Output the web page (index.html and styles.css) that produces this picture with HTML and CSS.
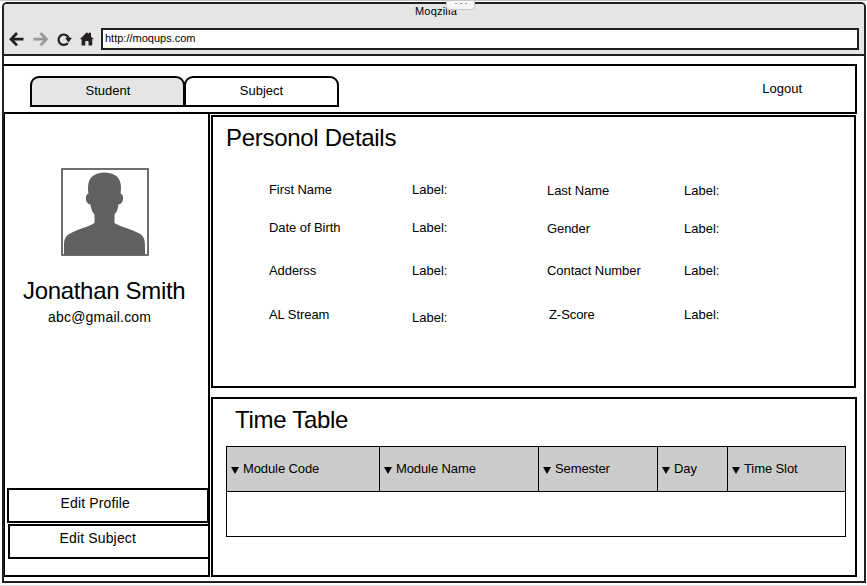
FILE: index.html
```html
<!DOCTYPE html>
<html lang="en">
<head>
<meta charset="utf-8">
<title>Moqzilla</title>
<link rel="stylesheet" href="styles.css">
</head>
<body>
<div class="window">
  <div class="handle"><i></i><i></i><i></i></div>
  <div class="chrome">
    <div class="window-title">Moqzilla</div>
    <div class="toolbar">
      <svg class="nav-icons" width="97" height="22" viewBox="4 28 97 22">
        <g fill="none" stroke-width="2.7">
          <path stroke="#231f20" d="M23.5 39.2H11.500M17 33L11 39.200L17 45.400"/>
          <path stroke="#999" d="M33.500 39.2H46M40.500 33L46.500 39.200L40.500 45.400"/>
          <path stroke="#231f20" stroke-width="2.2" d="M67.8 43A5.200 5.200 0 1 1 68.800 38.400"/>
        </g>
        <path fill="#231f20" d="M65 37.700H72L68.500 42.400ZM79.800 39.300L86.800 32.300L88.600 34.100V32.800H91V36.400L93.800 39.300H92.200V45.600H88.500V40.900H85.300V45.600H81.600V39.300Z"/>
      </svg>
      <div class="url">http://moqups.com</div>
    </div>
  </div>
  <header class="header">
    <nav class="tabs">
      <div class="tab active">Student</div>
      <div class="tab">Subject</div>
    </nav>
    <div class="logout">Logout</div>
  </header>
  <div class="body">
    <aside class="sidebar">
      <svg class="avatar" width="88" height="88" viewBox="0 0 88 88">
        <rect x="1" y="1" width="86" height="86" fill="#fff" stroke="#606060" stroke-width="1.8"/>
        <path fill="#606060" d="M3 87V79C3 71 4 68.500 9 65.500C17 61 27 59 33.500 55V46.500C31 44 30 40 29.500 36.500C24 36 23.500 26.500 27.500 25.500C26.500 20 27.300 17 27.500 15C29 8 35.500 4.500 43.500 4.500S58 8 59.500 15C59.700 17 60.500 20 59.500 25.500C63.500 26.500 63 36 57.500 36.500C57 40 56 44 53.500 46.500V55C60 59 70 61 78.500 65.500C83 68.500 84 71 84 79V87Z"/>
      </svg>
      <div class="name">Jonathan Smith</div>
      <div class="email">abc@gmail.com</div>
      <div class="actions">
        <div class="action profile">Edit Profile</div>
        <div class="action subject">Edit Subject</div>
      </div>
    </aside>
    <main class="main">
      <section class="panel details">
        <h1>Personol Details</h1>
        <div class="fields">
          <span>First Name</span><span>Label:</span><span class="low">Last Name</span><span class="low">Label:</span>
          <span>Date of Birth</span><span>Label:</span><span class="low">Gender</span><span class="low">Label:</span>
          <span>Adderss</span><span>Label:</span><span>Contact Number</span><span>Label:</span>
          <span>AL Stream</span><span class="lower">Label:</span><span class="inset">Z-Score</span><span>Label:</span>
        </div>
      </section>
      <section class="panel timetable">
        <h1>Time Table</h1>
        <div class="table">
          <div class="row head">
            <div class="cell">Module Code</div><div class="cell">Module Name</div><div class="cell">Semester</div><div class="cell">Day</div><div class="cell">Time Slot</div>
          </div>
          <div class="row empty"></div>
        </div>
      </section>
    </main>
  </div>
</div>
</body>
</html>
```
FILE: styles.css
```css
* { box-sizing: border-box; }
body {
  margin: 0;
  height: 586px;
  padding: 1px 1px 2px 2px;
  border-top: 1px solid #c4c4c4;
  border-bottom: 1px solid #d8d8d8;
  background: #fff;
  color: #000;
  font: 13px/16px "Liberation Sans", Arial, sans-serif;
  overflow: hidden;
}
.window {
  position: relative;
  width: 864px;
  height: 581px;
  border: 2px solid #231f20;
  border-radius: 5px 5px 0 0;
}
.handle {
  position: absolute;
  left: 442px;
  top: -4px;
  width: 29px;
  height: 10px;
  display: flex;
  justify-content: center;
  gap: 3px;
  padding-top: 3px;
  background: #f5f5f5;
  border: 1px solid #c8c8c8;
  border-top: 0;
  border-radius: 0 0 3px 3px;
}
.handle i { width: 2px; height: 1px; background: #999; }
.chrome {
  height: 52px;
  background: #e5e5e5;
  border-bottom: 2px solid #231f20;
  border-radius: 3px 3px 0 0;
}
.window-title { height: 24px; padding-left: 411px; font-size: 11px; line-height: 15px; letter-spacing: 0.2px; }
.toolbar { display: flex; }
.url {
  width: 758px;
  height: 22px;
  padding-left: 2px;
  border: 2px solid #231f20;
  background: #fff;
  font-size: 11px;
  line-height: 17px;
}
.header {
  display: flex;
  justify-content: space-between;
  width: 853px;
  height: 50px;
  margin-top: 8px;
  padding: 10px 53px 0 26px;
  border: 2px solid #000;
  border-left: 0;
}
.tabs { display: flex; }
.tab {
  width: 155px;
  height: 31px;
  border: 2px solid #000;
  border-radius: 9px 9px 0 0;
  background: #fff;
  line-height: 25px;
  text-align: center;
}
.tab + .tab { margin-left: -1px; }
.tab.active { padding-left: 1px; background: #e5e5e5; }
.logout { padding-top: 5px; }
.body { display: flex; gap: 1px; }
.sidebar {
  display: flex;
  flex-direction: column;
  width: 206px;
  height: 463px;
  border: solid #000;
  border-width: 0 2px 2px 1px;
}
.avatar { margin: 54px 0 0 56px; }
.name { margin: 21px 0 0 18px; font-size: 24px; line-height: 28px; letter-spacing: -0.32px; white-space: nowrap; }
.email { margin: 4px 0 0 43px; font-size: 14px; letter-spacing: 0.2px; }
.actions { margin: auto -2px 16px 2px; }
.action {
  width: 202px;
  height: 35px;
  padding-left: 51.5px;
  border: 2px solid #000;
  font-size: 14px;
  line-height: 26px;
  letter-spacing: 0.15px;
}
.action.subject { margin: 1px 0 0 1px; padding-left: 49.5px; line-height: 24px; }
.main { display: flex; flex-direction: column; gap: 9px; padding-top: 1px; }
.panel { border: 2px solid #000; }
h1 { margin: 0; font-size: 24px; line-height: 28px; font-weight: 400; letter-spacing: -0.29px; }
.details { width: 645px; height: 273px; padding: 7px 0 0 13px; }
.fields {
  display: grid;
  grid-template-columns: 143px 135px 137px 80px;
  grid-template-rows: 38px 43px 44px 20px;
  margin: 30px 0 0 43px;
  letter-spacing: -0.07px;
}
.fields span:nth-child(even) { letter-spacing: 0; }
.low { padding-top: 1px; }
.lower { padding-top: 3px; }
.inset { padding-left: 2px; }
.timetable { width: 646px; height: 180px; padding: 7px 0 0 13px; }
.timetable h1 { padding-left: 9px; }
.table { width: 620px; height: 91px; margin-top: 12px; border: 1px solid #000; }
.head {
  display: grid;
  grid-template-columns: 153px 159px 119px 70px 1fr;
  height: 45px;
  border-bottom: 1px solid #000;
  background: #ccc;
  letter-spacing: -0.1px;
}
.cell { display: flex; align-items: center; gap: 4px; padding-left: 4px; border-right: 1px solid #000; }
.cell:last-child { border-right: 0; }
.cell::before {
  content: "";
  margin-top: 3px;
  border: solid transparent;
  border-width: 7px 4px 0;
  border-top-color: #000;
}
.empty { height: 44px; }
```
